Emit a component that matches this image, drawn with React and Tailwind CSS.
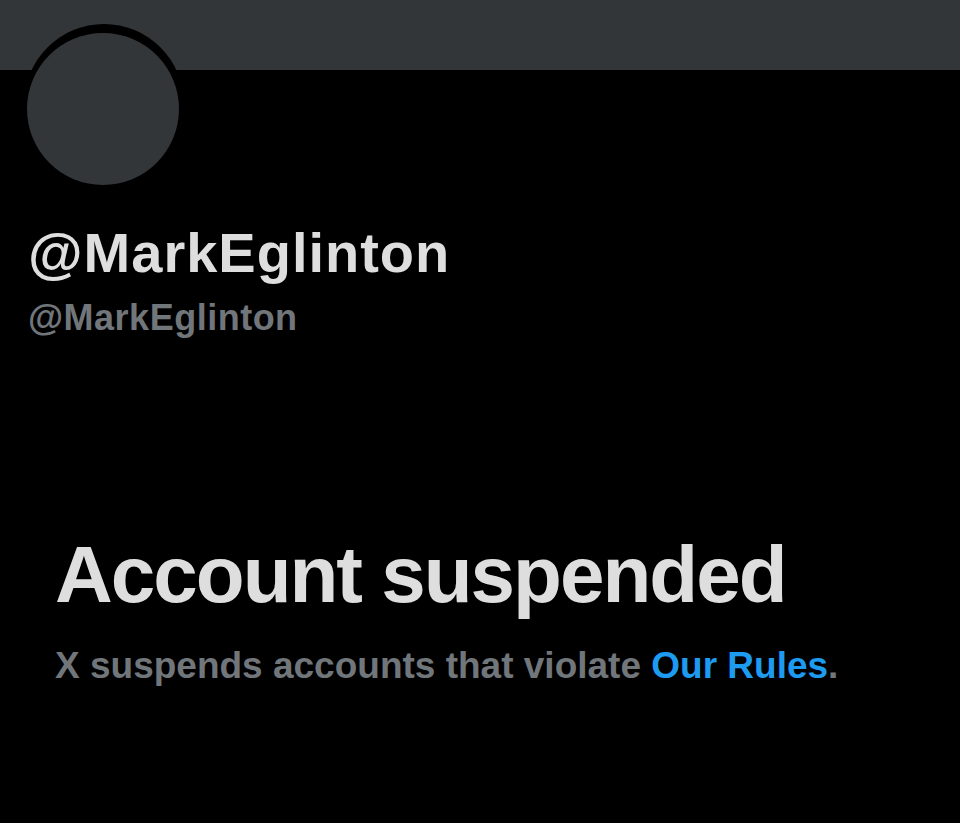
export default function App() {
  return (
    <div className="w-[960px] h-[823px] bg-black overflow-hidden" style={{ fontFamily: '"Liberation Sans", Arial, sans-serif' }}>
      <div className="h-[70px] bg-[#333639]" />
      <div className="ml-[24px] -mt-[46px] w-[160px] h-[162px] rounded-full bg-black relative">
        <div className="absolute left-[3px] top-[9px] w-[152px] h-[152px] rounded-full bg-[#333639]" />
      </div>
      <div className="pl-[28px] mt-[39px]">
        <div className="text-[56px] leading-[56px] font-bold tracking-[1px] text-[#dedede]">@MarkEglinton</div>
        <div className="mt-[19px] text-[36px] leading-[36px] font-bold tracking-[0.5px] text-[#71767b]">@MarkEglinton</div>
      </div>
      <div className="pl-[55px] mt-[199px]">
        <div className="text-[80px] leading-[80px] font-bold tracking-[-2px] text-[#dedede]">Account suspended</div>
        <div className="mt-[32px] text-[37px] leading-[37px] font-bold text-[#71767b]">
          X suspends accounts that violate <span className="text-[#1d9bf0]">Our Rules</span>.
        </div>
      </div>
    </div>
  );
}
